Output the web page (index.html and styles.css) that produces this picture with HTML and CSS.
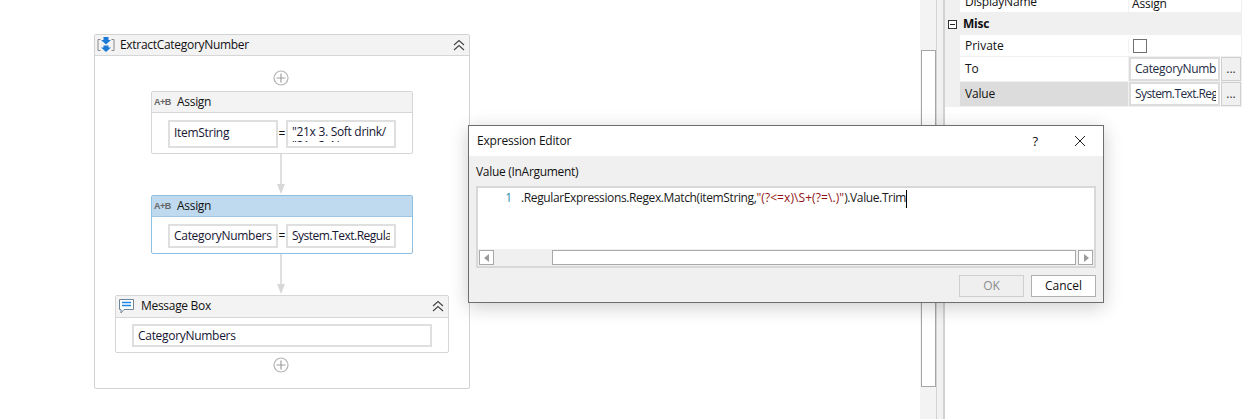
FILE: index.html
```html
<!DOCTYPE html>
<html lang="en">
<head>
<meta charset="utf-8">
<title>Expression Editor</title>
<link rel="stylesheet" href="styles.css">
</head>
<body>
<div class="app">
  <main class="designer">
    <section class="sequence">
      <header class="head seq-head">
        <svg class="seq-icon" width="20" height="18" viewBox="0 0 20 18"><path d="M4.500 3.500h-2.500v11h2.500M15.500 3.500h2.500v11h-2.500" fill="none" stroke="#8a8a8a" stroke-width="1"/><path d="M7.500 1h5v3h2.500l-5 4.500-5-4.500h2.500z" fill="#1c7ad6"/><path d="M7.500 9.500h5v2h2.500l-5 4.500-5-4.500h2.500z" fill="#1c7ad6"/></svg>
        <span class="title">ExtractCategoryNumber</span>
        <svg class="collapse" width="12" height="12" viewBox="0 0 12 12"><path d="M1 6l5-4.500L11 6M1 11l5-4.500L11 11" fill="none" stroke="#444" stroke-width="1.100"/></svg>
      </header>
      <div class="seq-body">
        <svg class="plus" width="16" height="16" viewBox="0 0 16 16"><circle cx="8" cy="8" r="7" fill="#fff" stroke="#b4b4b4" stroke-width="1.200"/><path d="M8 3.500v9M3.500 8h9" stroke="#a0a0a0" stroke-width="1.200"/></svg>
        <article class="activity assign first">
          <header class="head act-head"><span class="ab">A+B</span><span class="title">Assign</span></header>
          <div class="assign-body">
            <div class="field left lift">ItemString</div>
            <span class="eq">=</span>
            <div class="field right clipped"><span>"21x 3. Soft drink/</span><span class="cut">"21x 3. Noveaway</span></div>
          </div>
        </article>
        <div class="connector"><svg width="12" height="41" viewBox="0 0 12 41"><path d="M6 0v31" stroke="#e0e0e0" stroke-width="2"/><path d="M2 30h8l-4 10z" fill="#d8d8d8"/></svg></div>
        <article class="activity assign selected">
          <header class="head act-head"><span class="ab">A+B</span><span class="title">Assign</span></header>
          <div class="assign-body">
            <div class="field left">CategoryNumbers</div>
            <span class="eq">=</span>
            <div class="field right tight"><span>System.Text.Regula</span></div>
          </div>
        </article>
        <div class="connector"><svg width="12" height="41" viewBox="0 0 12 41"><path d="M6 0v31" stroke="#e0e0e0" stroke-width="2"/><path d="M2 30h8l-4 10z" fill="#d8d8d8"/></svg></div>
        <article class="activity message">
          <header class="head msg-head">
            <svg class="msg-icon" width="17" height="17" viewBox="0 0 17 17"><path d="M1.500 1.500h14v10H6L3 15v-3.500H1.500z" fill="#fff" stroke="#6f8496"/><path d="M4 4.500h9M4 7.500h9" stroke="#1c86e6" stroke-width="1.500"/></svg>
            <span class="title">Message Box</span>
            <svg class="collapse" width="12" height="12" viewBox="0 0 12 12"><path d="M1 6l5-4.500L11 6M1 11l5-4.500L11 11" fill="none" stroke="#444" stroke-width="1.100"/></svg>
          </header>
          <div class="msg-body"><div class="field wide">CategoryNumbers</div></div>
        </article>
        <svg class="plus end" width="16" height="16" viewBox="0 0 16 16"><circle cx="8" cy="8" r="7" fill="#fff" stroke="#b4b4b4" stroke-width="1.200"/><path d="M8 3.500v9M3.500 8h9" stroke="#a0a0a0" stroke-width="1.200"/></svg>
      </div>
    </section>
  </main>
  <div class="vscroll"><div class="vthumb"></div></div>
  <div class="gutter"></div>
  <aside class="props">
    <div class="row display"><span class="name">DisplayName</span><span class="val plain">Assign</span></div>
    <div class="row cat">
      <svg class="minus" width="11" height="11" viewBox="0 0 11 11"><rect x="1.500" y="1.500" width="8" height="8" fill="#fff" stroke="#333"/><path d="M3 5.500h5" stroke="#222"/></svg>
      <span class="cat-name">Misc</span>
    </div>
    <div class="row private"><span class="name">Private</span><span class="val plain"><span class="check"></span></span></div>
    <div class="row edit"><span class="name">To</span><span class="val"><span class="pbox"><span class="ptext">CategoryNumb</span></span><span class="dots">...</span></span></div>
    <div class="row edit active"><span class="name">Value</span><span class="val"><span class="pbox"><span class="ptext tight-text">System.Text.Reg</span></span><span class="dots">...</span></span></div>
  </aside>
</div>
<div class="dialog">
  <header class="dlg-title">
    <span class="dlg-name">Expression Editor</span>
    <span class="help">?</span>
    <svg class="close" width="12" height="12" viewBox="0 0 12 12"><path d="M1 1l10 10M11 1L1 11" stroke="#222" stroke-width="1"/></svg>
  </header>
  <div class="dlg-body">
    <div class="dlg-label">Value (InArgument)</div>
    <div class="editor">
      <div class="code"><span class="ln">1</span><span class="src">.RegularExpressions.Regex.Match(itemString,<span class="str">"(?&lt;=x)\S+(?=\.)"</span>).Value.Trim</span><span class="caret"></span></div>
      <div class="hscroll">
        <span class="sbtn"><svg width="6" height="8" viewBox="0 0 6 8"><path d="M5 0v8L0 4z" fill="#9a9a9a"/></svg></span>
        <span class="hgap"></span>
        <span class="hthumb"></span>
        <span class="sbtn"><svg width="6" height="8" viewBox="0 0 6 8"><path d="M1 0v8l5-4z" fill="#9a9a9a"/></svg></span>
      </div>
    </div>
    <div class="dlg-actions"><button class="btn off" type="button">OK</button><button class="btn" type="button">Cancel</button></div>
  </div>
</div>
</body>
</html>
```
FILE: styles.css
```css
* { box-sizing: border-box; }
html, body { margin: 0; height: 419px; overflow: hidden; background: #fff; }
body { font: 12px/16px "Open Sans", "Noto Sans", sans-serif; color: #111; }
.app { display: flex; height: 419px; }

.designer { width: 920px; padding: 34px 0 0 94px; }
.sequence { width: 376px; height: 355px; border: 1px solid #d2d2d2; border-radius: 2px; }
.head { display: flex; align-items: center; background: #f3f3f3; border-bottom: 1px solid #d6d6d6; }
.title { letter-spacing: -.3px; }
.seq-head { height: 21px; padding: 0 3px 1px 1px; }
.seq-icon { margin-right: 4px; }
.seq-head .title { flex: 1; }
.collapse { display: block; margin-right: 1px; }
.seq-body { display: flex; flex-direction: column; align-items: center; padding-top: 14px; }
.plus { display: block; flex: none; margin-right: 2px; }
.plus.end { margin-top: 4px; }
.activity { background: #fff; border: 1px solid #d6d6d6; border-radius: 2px; }
.assign { width: 262px; height: 63px; }
.first { margin-top: 5px; }
.act-head { height: 21px; padding: 0 0 1px 2px; }
.ab { width: 23px; font: bold 9px/10px "Liberation Sans", sans-serif; color: #666; letter-spacing: -.5px; }
.assign-body { display: flex; align-items: stretch; padding: 7px 16px 5px; height: 40px; }
.selected { border-color: #8fc0e4; height: 59px; }
.selected .act-head { background: #bfd9ee; border-bottom-color: #9cc6e6; }
.selected .assign-body { height: 36px; padding: 7px 16px 5px; }
.field { border: 2px solid #dfdfdf; background: #fff; padding: 0 4px; white-space: nowrap; overflow: hidden; display: flex; flex-direction: column; justify-content: center; letter-spacing: -.3px; color: #161633; }
.field span { display: block; overflow: hidden; flex: none; }
.left { width: 110px; }
.lift { padding-bottom: 3px; }
.right { width: 110px; padding-right: 4px; }
.tight { letter-spacing: -.5px; }
.clipped { justify-content: flex-start; padding-top: 2px; }
.field .cut { height: 4px; margin-top: -2px; }
.eq { width: 8px; text-align: center; align-self: center; color: #111; }
.connector { height: 41px; flex: none; margin-right: 2px; }
.connector svg { display: block; }
.message { width: 334px; height: 58px; flex: none; }
.msg-head { height: 22px; padding: 0 3px 1px 2px; }
.msg-icon { margin-right: 6px; }
.msg-head .title { flex: 1; }
.msg-body { padding: 6px 16px; }
.wide { height: 23px; padding-left: 4px; }

.vscroll { width: 17px; background: #f3f3f3; border-right: 1px solid #d4d4d4; padding: 50px 0 0 1px; }
.vthumb { width: 15px; height: 337px; background: #fff; border: 1px solid #a6a6a6; }
.gutter { width: 8px; background: #f2f2f2; border-right: 2px solid #d2d2d2; }
.props { flex: 1; display: flex; flex-direction: column; padding-right: 1px; margin-top: -3px; align-self: flex-start; background: #f0f0f0; padding-left: 15px; }
.row { display: flex; background: #fff; border-bottom: 1px solid #f0f0f0; }
.name { width: 168px; padding-left: 5px; flex: none; }
.val { flex: 1; display: flex; border-left: 1px solid #f0f0f0; min-width: 0; }
.plain { padding-left: 3px; align-items: center; }
.display { height: 16px; align-items: flex-end; }
.display .name, .display .val { height: 16px; line-height: 12px; letter-spacing: -.2px; }
.cat { height: 22px; align-items: center; background: #f0f0f0; border: 0; margin-left: -15px; }
.minus { margin: 0 5px 0 2px; }
.cat-name { font-weight: 700; letter-spacing: -.2px; }
.private { height: 22px; align-items: center; }
.check { width: 14px; height: 14px; border: 1px solid #707070; background: #fff; margin-left: 1px; }
.edit { height: 25px; align-items: stretch; }
.edit .name { display: flex; align-items: center; letter-spacing: -.2px; }
.pbox { width: 91px; flex: none; border: 2px solid #dcdcdc; background: #fff; padding: 0 2px 0 4px; display: flex; align-items: center; color: #1e2c44; letter-spacing: -.3px; }
.ptext { display: block; overflow: hidden; white-space: nowrap; width: 100%; }
.tight-text { letter-spacing: -.6px; }
.dots { width: 20px; flex: none; border: 1px solid #cfcfcf; background: #f0f0f0; text-align: center; line-height: 22px; margin-left: 1px; color: #333; }
.active .name { background: #dcdcdc; }

.dialog { position: absolute; left: 468px; top: 125px; width: 636px; height: 178px; border: 1px solid #6e6e6e; background: #f0f0f0; box-shadow: 0 4px 18px rgba(0,0,0,.2); display: flex; flex-direction: column; }
.dlg-title { height: 30px; background: #fff; display: flex; align-items: center; padding: 0 17px 0 8px; flex: none; }
.dlg-name { flex: 1; letter-spacing: -.2px; }
.help { font-size: 13px; margin-right: 36px; }
.close { display: block; }
.dlg-body { flex: 1; padding: 8px 7px 0; }
.dlg-label { height: 22px; letter-spacing: -.3px; line-height: 16px; }
.editor { height: 82px; border: 2px solid #d8d8d8; background: #fff; display: flex; flex-direction: column; }
.code { flex: 1; display: flex; align-items: flex-start; padding-top: 2px; font-size: 12px; white-space: nowrap; }
.ln { width: 34px; text-align: right; color: #2b91af; margin-right: 9px; }
.src { letter-spacing: -.38px; color: #1a1a1a; }
.str { color: #8f1515; letter-spacing: .08px; }
.caret { width: 1px; height: 18px; background: #000; }
.hscroll { height: 17px; background: #f0f0f0; display: flex; padding: 1px 1px 0 1px; gap: 1px; }
.sbtn { width: 15px; height: 15px; border: 1px solid #a8a8a8; background: #fff; display: flex; align-items: center; justify-content: center; flex: none; }
.hgap { width: 56px; }
.hthumb { width: 0; flex: 1; height: 15px; background: #fff; border: 1px solid #a8a8a8; margin-right: 1px; }
.dlg-actions { display: flex; justify-content: flex-end; gap: 7px; padding-top: 7px; }
.btn { width: 65px; height: 22px; padding: 0; font: inherit; background: #fff; color: #111; border: 1px solid #b0b0b0; }
.btn.off { background: #efefef; color: #8c8c8c; border-color: #cfcfcf; }
```
